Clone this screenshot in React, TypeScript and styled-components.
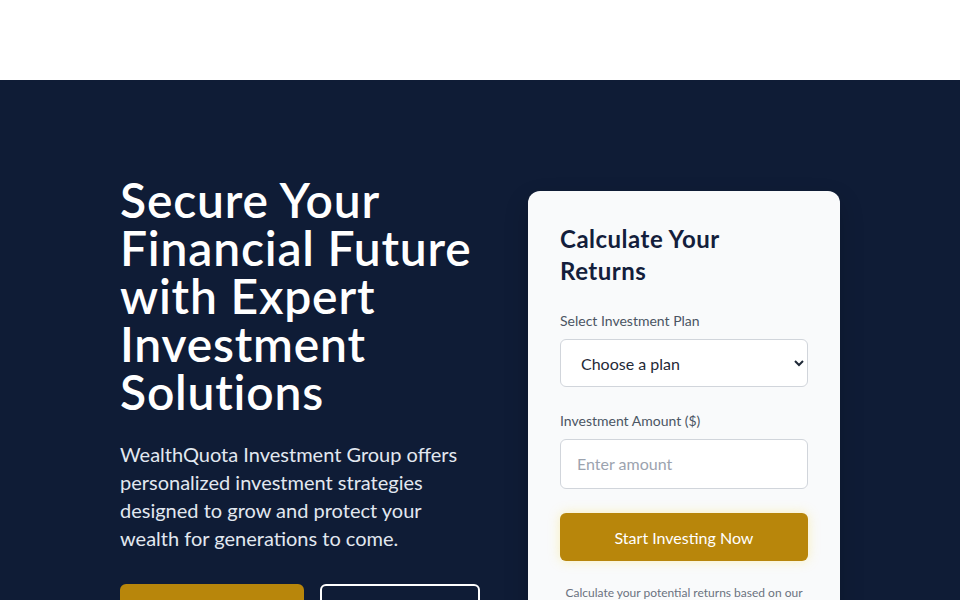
import styled, { createGlobalStyle } from 'styled-components'

const GlobalStyle = createGlobalStyle`
  * { box-sizing: border-box; }
  body {
    margin: 0;
    font-family: Lato, "Noto Sans", sans-serif;
    background: #ffffff;
  }
`

const Header = styled.header`
  height: 80px;
  background: #ffffff;
`

const Hero = styled.section`
  background: #0f1c36;
  padding: 96px 0 64px;
`

const Container = styled.div`
  display: grid;
  grid-template-columns: 360px 312px;
  column-gap: 48px;
  justify-content: center;
  align-items: start;
`

const Title = styled.h1`
  margin: 0 0 24px;
  font-size: 48px;
  line-height: 48px;
  font-weight: 600;
  letter-spacing: 0.8px;
  color: #ffffff;
`

const Lead = styled.p`
  margin: 0 0 32px;
  font-size: 20px;
  line-height: 28px;
  color: #e2e8f0;
`

const Actions = styled.div`
  display: flex;
  gap: 16px;
`

const HeroButton = styled.a<{ $outline?: boolean }>`
  display: inline-flex;
  align-items: center;
  justify-content: center;
  height: 52px;
  width: ${({ $outline }) => ($outline ? '160px' : '184px')};
  border-radius: 6px;
  font-size: 18px;
  font-weight: 600;
  text-decoration: none;
  color: #ffffff;
  background: ${({ $outline }) => ($outline ? 'transparent' : '#b8860b')};
  border: 2px solid ${({ $outline }) => ($outline ? '#ffffff' : '#b8860b')};
`

const Card = styled.div`
  margin-top: 15px;
  background: #f9fafb;
  border-radius: 12px;
  padding: 32px;
  box-shadow: 0 10px 25px rgba(0, 0, 0, 0.2);
`

const CardTitle = styled.h2`
  max-width: 220px;
  margin: 0 0 24px;
  font-size: 24px;
  line-height: 32px;
  font-weight: 700;
  letter-spacing: 0.5px;
  color: #141e3c;
`

const Field = styled.div`
  margin-bottom: 24px;
`

const Label = styled.label`
  display: block;
  margin-bottom: 8px;
  font-size: 14px;
  line-height: 20px;
  color: #4b5563;
`

const Select = styled.select`
  width: 100%;
  height: 48px;
  padding: 0 16px;
  font-family: inherit;
  font-size: 16px;
  color: #1f2937;
  background: #ffffff;
  border: 1px solid #d1d5db;
  border-radius: 6px;
`

const Input = styled.input`
  width: 100%;
  padding: 12px 16px;
  font-family: inherit;
  font-size: 16px;
  line-height: 24px;
  color: #111827;
  background: #ffffff;
  border: 1px solid #d1d5db;
  border-radius: 6px;
  &::placeholder { color: #9ca3af; }
`

const Submit = styled.button`
  width: 100%;
  height: 48px;
  border: none;
  border-radius: 6px;
  background: #b8860b;
  color: #ffffff;
  font-family: inherit;
  font-size: 16px;
  box-shadow: 0 0 12px rgba(253, 224, 71, 0.35);
`

const Note = styled.p`
  margin: 24px 0 0;
  font-size: 12px;
  line-height: 16px;
  text-align: center;
  color: #6b7280;
`

export default function App() {
  return (
    <>
      <GlobalStyle />
      <Header />
      <Hero>
        <Container>
          <div>
            <Title>Secure Your Financial Future with Expert Investment Solutions</Title>
            <Lead>
              WealthQuota Investment Group offers personalized investment strategies designed to grow
              and protect your wealth for generations to come.
            </Lead>
            <Actions>
              <HeroButton href="#">Get Started</HeroButton>
              <HeroButton href="#" $outline>
                Learn More
              </HeroButton>
            </Actions>
          </div>
          <Card>
            <CardTitle>Calculate Your Returns</CardTitle>
            <Field>
              <Label>Select Investment Plan</Label>
              <Select defaultValue="">
                <option value="">Choose a plan</option>
                <option value="starter">Starter Plan</option>
                <option value="growth">Growth Plan</option>
                <option value="premium">Premium Plan</option>
              </Select>
            </Field>
            <Field>
              <Label>Investment Amount ($)</Label>
              <Input type="number" placeholder="Enter amount" />
            </Field>
            <Submit>Start Investing Now</Submit>
            <Note>Calculate your potential returns based on our historical performance data.</Note>
          </Card>
        </Container>
      </Hero>
    </>
  )
}
